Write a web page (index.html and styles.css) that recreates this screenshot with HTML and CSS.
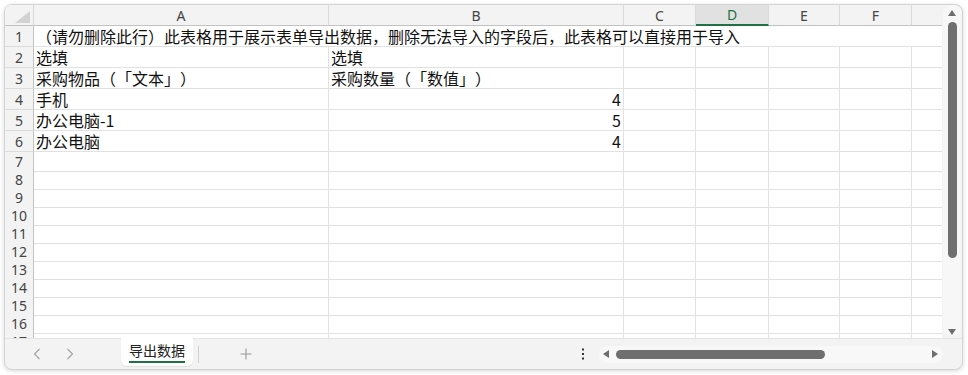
FILE: index.html
```html
<!DOCTYPE html>
<html lang="zh-CN">
<head>
<meta charset="UTF-8">
<meta name="viewport" content="width=device-width, initial-scale=1.0">
<title>导出数据</title>
<link rel="stylesheet" href="styles.css">
</head>
<body>

<div class="window">
  <div class="main">
    <div class="sheet">
      <div class="row head">
        <div class="corner">
          <svg width="15" height="12" viewBox="0 0 15 12"><polygon points="15,0 15,12 0,12" fill="#d2d2d2"/></svg>
        </div>
        <div class="col">A</div>
        <div class="col">B</div>
        <div class="col">C</div>
        <div class="col sel">D</div>
        <div class="col">E</div>
        <div class="col">F</div>
        <div class="col">G</div>
      </div>

      <div class="row tall">
        <div class="rh">1</div>
        <div class="cell wide">（请勿删除此行）此表格用于展示表单导出数据，删除无法导入的字段后，此表格可以直接用于导入</div>
      </div>
      <div class="row tall">
        <div class="rh">2</div>
        <div class="cell">选填</div><div class="cell">选填</div>
        <div></div><div></div><div></div><div></div><div></div>
      </div>
      <div class="row tall">
        <div class="rh">3</div>
        <div class="cell">采购物品（「文本」）</div><div class="cell">采购数量（「数值」）</div>
        <div></div><div></div><div></div><div></div><div></div>
      </div>
      <div class="row tall">
        <div class="rh">4</div>
        <div class="cell">手机</div><div class="cell num">4</div>
        <div></div><div></div><div></div><div></div><div></div>
      </div>
      <div class="row tall">
        <div class="rh">5</div>
        <div class="cell">办公电脑-1</div><div class="cell num">5</div>
        <div></div><div></div><div></div><div></div><div></div>
      </div>
      <div class="row tall">
        <div class="rh">6</div>
        <div class="cell">办公电脑</div><div class="cell num">4</div>
        <div></div><div></div><div></div><div></div><div></div>
      </div>

      <div class="row short"><div class="rh">7</div><div></div><div></div><div></div><div></div><div></div><div></div><div></div></div>
      <div class="row short"><div class="rh">8</div><div></div><div></div><div></div><div></div><div></div><div></div><div></div></div>
      <div class="row short"><div class="rh">9</div><div></div><div></div><div></div><div></div><div></div><div></div><div></div></div>
      <div class="row short"><div class="rh">10</div><div></div><div></div><div></div><div></div><div></div><div></div><div></div></div>
      <div class="row short"><div class="rh">11</div><div></div><div></div><div></div><div></div><div></div><div></div><div></div></div>
      <div class="row short"><div class="rh">12</div><div></div><div></div><div></div><div></div><div></div><div></div><div></div></div>
      <div class="row short"><div class="rh">13</div><div></div><div></div><div></div><div></div><div></div><div></div><div></div></div>
      <div class="row short"><div class="rh">14</div><div></div><div></div><div></div><div></div><div></div><div></div><div></div></div>
      <div class="row short"><div class="rh">15</div><div></div><div></div><div></div><div></div><div></div><div></div><div></div></div>
      <div class="row short"><div class="rh">16</div><div></div><div></div><div></div><div></div><div></div><div></div><div></div></div>
      <div class="row short"><div class="rh">17</div><div></div><div></div><div></div><div></div><div></div><div></div><div></div></div>
    </div>

    <div class="vscroll">
      <div class="vtrack">
        <svg class="arrow-up" width="8" height="6" viewBox="0 0 8 6"><polygon points="4,0 8,6 0,6" fill="#6e6e6e"/></svg>
        <div class="vthumb"></div>
        <svg class="arrow-down" width="8" height="6" viewBox="0 0 8 6"><polygon points="0,0 8,0 4,6" fill="#6e6e6e"/></svg>
      </div>
    </div>
  </div>

  <div class="tabbar">
    <svg class="chev-left" width="8" height="12" viewBox="0 0 8 12"><polyline points="6.5,1 1.5,6 6.5,11" fill="none" stroke="#a0a0a0" stroke-width="1.1"/></svg>
    <svg class="chev-right" width="8" height="12" viewBox="0 0 8 12"><polyline points="1.5,1 6.5,6 1.5,11" fill="none" stroke="#a0a0a0" stroke-width="1.1"/></svg>
    <div class="tab"><span>导出数据</span></div>
    <div class="tab-sep"></div>
    <svg class="add" width="12" height="12" viewBox="0 0 12 12"><path d="M6 0.5V11.5M0.5 6H11.5" stroke="#9a9a9a" stroke-width="1.1"/></svg>
    <svg class="dots" width="4" height="12" viewBox="0 0 4 12"><rect x="1" y="0.5" width="2" height="2" fill="#333"/><rect x="1" y="5" width="2" height="2" fill="#333"/><rect x="1" y="9.5" width="2" height="2" fill="#333"/></svg>
    <div class="hscroll">
      <svg class="arrow-left" width="6" height="8" viewBox="0 0 6 8"><polygon points="6,0 6,8 0,4" fill="#6e6e6e"/></svg>
      <div class="hthumb"></div>
      <svg class="arrow-right" width="6" height="8" viewBox="0 0 6 8"><polygon points="0,0 6,4 0,8" fill="#6e6e6e"/></svg>
    </div>
  </div>
</div>

</body>
</html>
```

FILE: styles.css
```css
body {
  margin: 0;
  padding: 0;
  background-color: #fff;
  font-family: "Noto Sans CJK SC", "Noto Sans", sans-serif;
}

.window {
  margin: 4px;
  width: 957px;
  height: 364px;
  border: 1px solid #d4d4d4;
  border-radius: 8px;
  background-color: #f3f3f3;
  box-shadow: 0 1px 4px rgba(0, 0, 0, 0.16);
  overflow: hidden;
}

.main {
  display: flex;
  height: 333px;
}

/* grille */
.sheet {
  width: 937px;
  overflow: hidden;
  background-color: #fff;
}

.row {
  display: grid;
  grid-template-columns: 29px 295px 295px 72px 73px 71px 72px 72px;
  width: 979px;
}

.row > div {
  box-sizing: border-box;
  border-right: 1px solid #e1e1e1;
  border-bottom: 1px solid #e1e1e1;
}

.head,
.tall {
  height: 21px;
}

.short {
  height: 18px;
}

.head > div {
  background-color: #f3f3f3;
  border-right-color: #d9d9d9;
  border-bottom-color: #c2c2c2;
}

.corner {
  display: flex;
  align-items: flex-end;
  justify-content: flex-end;
  padding: 0 3px 2px 0;
}

.corner svg {
  display: block;
}

.col {
  display: flex;
  align-items: center;
  justify-content: center;
  font-family: "Noto Sans", sans-serif;
  font-size: 14px;
  color: #444;
}

.head > .sel {
  background-color: #e1e1e1;
  color: #1e7145;
  border-bottom: 2px solid #1e7145;
}

.row > .rh {
  display: flex;
  align-items: center;
  justify-content: center;
  background-color: #f3f3f3;
  border-right-color: #c2c2c2;
  border-bottom-color: #dcdcdc;
  font-family: "Noto Sans", sans-serif;
  font-size: 14px;
  color: #444;
}

.cell {
  display: flex;
  align-items: center;
  padding: 0 2px;
  font-size: 16px;
  line-height: 20px;
  color: #111;
  white-space: nowrap;
  text-spacing-trim: space-all;
}

.wide {
  grid-column: 2 / -1;
}

.num {
  justify-content: flex-end;
}

/* barre verticale */
.vscroll {
  width: 20px;
  display: flex;
}

.vtrack {
  flex: 1;
  margin: 0 1px 2px 1px;
  border-radius: 9px;
  background-color: #f7f7f7;
  display: flex;
  flex-direction: column;
  align-items: center;
}

.arrow-up {
  margin-top: 5px;
}

.vthumb {
  margin-top: 6px;
  width: 9px;
  height: 236px;
  border-radius: 5px;
  background-color: #6f6f6f;
}

.arrow-down {
  margin-top: auto;
  margin-bottom: 1px;
}

/* onglets */
.tabbar {
  height: 30px;
  border-top: 1px solid #e4e4e4;
  display: flex;
  align-items: center;
}

.chev-left {
  margin-left: 28px;
}

.chev-right {
  margin-left: 25px;
}

.tab {
  margin-left: 47px;
  align-self: flex-start;
  margin-top: -1px;
  width: 72px;
  height: 28px;
  box-sizing: border-box;
  background-color: #fff;
  border-radius: 0 0 6px 6px;
  box-shadow: 0 1px 1px rgba(0, 0, 0, 0.08);
  display: flex;
  justify-content: center;
  padding-top: 3px;
}

.tab span {
  font-size: 14px;
  line-height: 18px;
  color: #222;
  padding-bottom: 2px;
  height: 18px;
  border-bottom: 2px solid #1e7145;
}

.tab-sep {
  margin-left: 5px;
  width: 1px;
  height: 17px;
  background-color: #d0d0d0;
}

.add {
  margin-left: 41px;
}

.dots {
  margin-left: 329px;
}

.hscroll {
  margin-left: 14px;
  width: 344px;
  height: 17px;
  box-sizing: border-box;
  border-radius: 9px;
  background-color: #f8f8f8;
  display: flex;
  align-items: center;
  padding: 0 5px 0 4px;
}

.hthumb {
  margin-left: 7px;
  width: 209px;
  height: 9px;
  border-radius: 5px;
  background-color: #6f6f6f;
}

.arrow-right {
  margin-left: auto;
}
```
